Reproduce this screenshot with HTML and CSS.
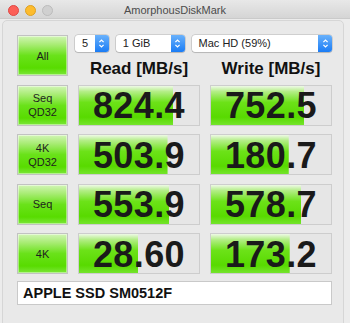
FILE: index.html
```html
<!DOCTYPE html>
<html lang="en">
<head>
    <meta charset="utf-8">
    <title>AmorphousDiskMark</title>
    <link rel="stylesheet" href="styles.css">
</head>
<body>
<div class="window">
    <div class="titlebar">
        <div class="lights">
            <span class="light red"></span>
            <span class="light yellow"></span>
            <span class="light gray"></span>
        </div>
        <span class="title">AmorphousDiskMark</span>
    </div>

    <div class="panel">
        <div class="grid">
            <button class="test">All</button>
            <div class="head">
                <div class="selects">
                    <div class="select s-count"><span class="val">5</span><span class="arrow"><svg width="7" height="11" viewBox="0 0 7 11"><path d="M1.4 4.2 L3.5 2.1 L5.6 4.2 M1.4 6.8 L3.5 8.9 L5.6 6.8" fill="none" stroke="#fff" stroke-width="1.2"/></svg></span></div>
                    <div class="select s-size"><span class="val">1 GiB</span><span class="arrow"><svg width="7" height="11" viewBox="0 0 7 11"><path d="M1.4 4.2 L3.5 2.1 L5.6 4.2 M1.4 6.8 L3.5 8.9 L5.6 6.8" fill="none" stroke="#fff" stroke-width="1.2"/></svg></span></div>
                    <div class="select s-disk"><span class="val">Mac HD (59%)</span><span class="arrow"><svg width="7" height="11" viewBox="0 0 7 11"><path d="M1.4 4.2 L3.5 2.1 L5.6 4.2 M1.4 6.8 L3.5 8.9 L5.6 6.8" fill="none" stroke="#fff" stroke-width="1.2"/></svg></span></div>
                </div>
                <div class="labels">
                    <span>Read [MB/s]</span>
                    <span>Write [MB/s]</span>
                </div>
            </div>

            <button class="test">Seq<br>QD32</button>
            <div class="result" style="--w: 78.7%">824.4</div>
            <div class="result" style="--w: 77.9%">752.5</div>

            <button class="test">4K<br>QD32</button>
            <div class="result" style="--w: 73.8%">503.9</div>
            <div class="result" style="--w: 64.8%">180.7</div>

            <button class="test">Seq</button>
            <div class="result" style="--w: 75.4%">553.9</div>
            <div class="result" style="--w: 75.4%">578.7</div>

            <button class="test">4K</button>
            <div class="result" style="--w: 49.2%">28.60</div>
            <div class="result" style="--w: 65.6%">173.2</div>
        </div>

        <div class="drive">APPLE SSD SM0512F</div>
    </div>
</div>
</body>
</html>
```

FILE: styles.css
```css
body {
    margin: 0;
    padding: 0;
    background: #ececec;
    font-family: "Liberation Sans", Arial, sans-serif;
    color: #1c1c1c;
}

.window {
    width: 350px;
    height: 323px;
    background: #ececec;
    overflow: hidden;
}

/* Title bar */
.titlebar {
    position: relative;
    height: 18px;
    border-bottom: 1px solid #cacaca;
    background: linear-gradient(#e8e8e8, #d5d5d5);
    display: flex;
    align-items: center;
    justify-content: center;
}

.lights {
    position: absolute;
    left: 8px;
    top: 5px;
    display: flex;
    gap: 6px;
}

.light {
    width: 9px;
    height: 9px;
    border-radius: 50%;
    border: 0.5px solid transparent;
}

.red {
    background: #fc5f57;
    border-color: #df4744;
}

.yellow {
    background: #fdbc2e;
    border-color: #dea123;
}

.gray {
    background: #d0d0d0;
    border-color: #bcbcbc;
}

.title {
    font-size: 11px;
    color: #4c4c4c;
    padding-top: 1px;
}

/* Inner box */
.panel {
    margin: 1px 6px 0 2px;
    height: 282px;
    padding: 14px;
    border: 1px solid #d6d6d6;
    border-radius: 5px;
    background: #e9e9e9;
}

.grid {
    display: grid;
    grid-template-columns: 51px 122px 122px;
    grid-auto-rows: 41px;
    column-gap: 10px;
    row-gap: 8.5px;
}

.test {
    margin: 0;
    padding: 0;
    font-family: inherit;
    font-size: 11px;
    line-height: 14px;
    color: #1e1e1e;
    border: 1px solid #c2c2c2;
    box-shadow: inset 0 0 0 1px rgba(255, 255, 255, 0.45);
    background: linear-gradient(#d2f5b6 0%, #a8ec74 22%, #6ae21a 50%, #58dc00 82%, #7ce63a 100%);
}

.head {
    grid-column: span 2;
}

.selects {
    display: flex;
    gap: 7px;
    margin-left: -3px;
}

.select {
    height: 17px;
    display: flex;
    background: #fff;
    border-radius: 3px;
    box-shadow: 0 0 0 0.5px rgba(0, 0, 0, 0.22), 0 1px 1px rgba(0, 0, 0, 0.12);
    font-size: 11px;
    color: #222;
}

.s-count { width: 34px; }
.s-size { width: 69px; }
.s-disk { width: 141px; }

.select .val {
    flex: 1;
    padding-left: 7px;
    line-height: 17px;
}

.select .arrow {
    width: 14px;
    border-radius: 0 3px 3px 0;
    background: linear-gradient(#69b1fb, #1a7cf5);
    display: flex;
    align-items: center;
    justify-content: center;
}

.labels {
    display: grid;
    grid-template-columns: 122px 122px;
    column-gap: 10px;
    margin-top: 7px;
    font-size: 17px;
    line-height: 20px;
    font-weight: bold;
    text-align: center;
    color: #111;
}

.result {
    box-sizing: border-box;
    border: 1px solid #cdcdcd;
    background: linear-gradient(#eef9e6 0%, #b4ee88 14%, #6ce218 42%, #58da00 80%, #74e42c 100%) 0 0 / var(--w) 100% no-repeat, #e6e6e6;
    display: flex;
    align-items: center;
    justify-content: center;
    padding-top: 2px;
    font-size: 36px;
    line-height: 1;
    font-weight: bold;
    letter-spacing: 0.4px;
    color: #1a1a1a;
}

.drive {
    box-sizing: border-box;
    margin-top: 7px;
    width: 315px;
    height: 24px;
    padding-left: 5px;
    border: 1px solid #c9c9c9;
    background: #fff;
    font-size: 14.5px;
    line-height: 22px;
    font-weight: bold;
    color: #111;
}
```
